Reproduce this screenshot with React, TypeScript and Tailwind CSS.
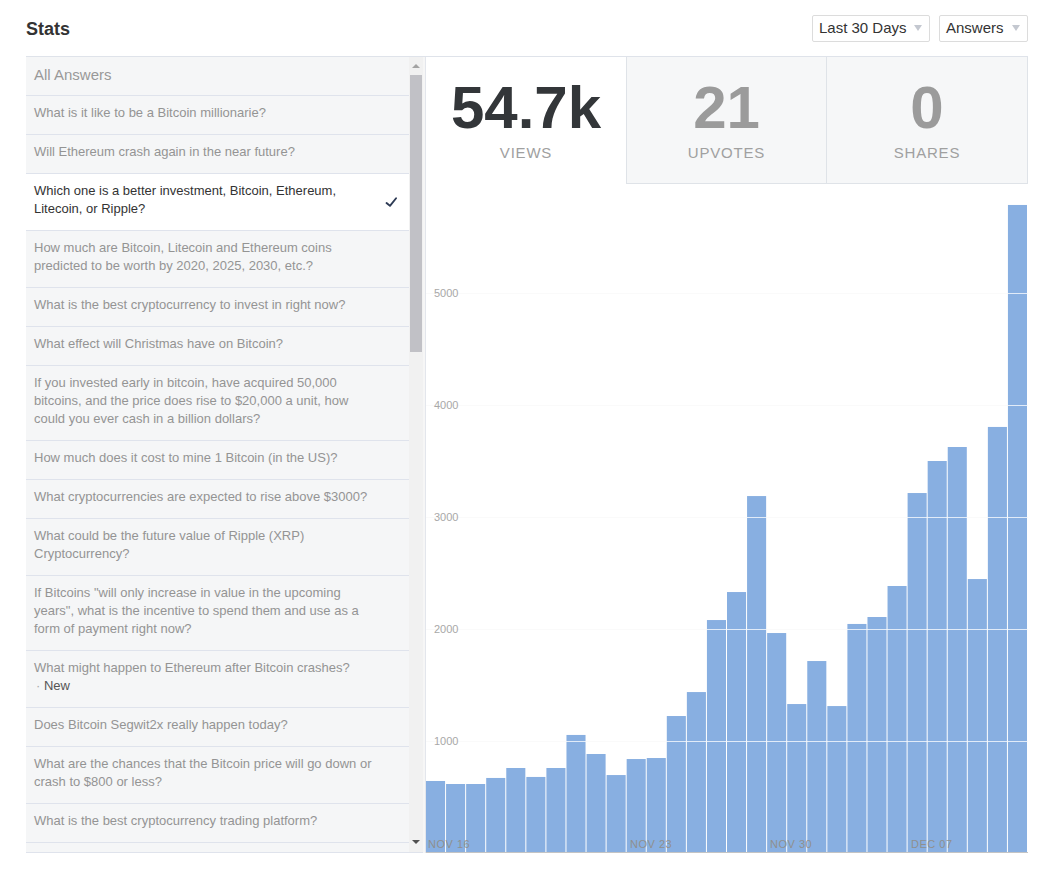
import React from 'react';
import { Check } from 'lucide-react';

const answers: { q: string; selected?: boolean; isNew?: boolean }[] = [
  { q: 'What is it like to be a Bitcoin millionarie?' },
  { q: 'Will Ethereum crash again in the near future?' },
  { q: 'Which one is a better investment, Bitcoin, Ethereum, Litecoin, or Ripple?', selected: true },
  { q: 'How much are Bitcoin, Litecoin and Ethereum coins predicted to be worth by 2020, 2025, 2030, etc.?' },
  { q: 'What is the best cryptocurrency to invest in right now?' },
  { q: 'What effect will Christmas have on Bitcoin?' },
  { q: 'If you invested early in bitcoin, have acquired 50,000 bitcoins, and the price does rise to $20,000 a unit, how could you ever cash in a billion dollars?' },
  { q: 'How much does it cost to mine 1 Bitcoin (in the US)?' },
  { q: 'What cryptocurrencies are expected to rise above $3000?' },
  { q: 'What could be the future value of Ripple (XRP) Cryptocurrency?' },
  { q: 'If Bitcoins "will only increase in value in the upcoming years", what is the incentive to spend them and use as a form of payment right now?' },
  { q: 'What might happen to Ethereum after Bitcoin crashes?', isNew: true },
  { q: 'Does Bitcoin Segwit2x really happen today?' },
  { q: 'What are the chances that the Bitcoin price will go down or crash to $800 or less?' },
  { q: 'What is the best cryptocurrency trading platform?' },
];

const views = [643, 616, 616, 670, 759, 679, 759, 1054, 884, 696, 839, 848, 1223, 1437, 2080, 2330, 3187, 1964, 1330, 1714, 1312, 2045, 2107, 2384, 3214, 3500, 3625, 2446, 3804, 5786];

const W = 602;
const H = 669;
const unit = 112 / 1000;

export default function App() {
  return (
    <div className="w-[1049px] h-[869px] bg-white pl-[26px] pr-[21px] pt-[15px] overflow-hidden" style={{ fontFamily: '"Liberation Sans", Arial, sans-serif' }}>
      {/* Header */}
      <header className="flex items-center justify-between h-[26px] mb-[15px]">
        <h1 className="text-[18px] font-bold text-[#333] mt-[3px]">Stats</h1>
        <div className="flex gap-[9px]">
          <Dropdown label="Last 30 Days" width="w-[118px]" />
          <Dropdown label="Answers" width="w-[89px]" />
        </div>
      </header>

      <div className="flex h-[797px] border-t border-[#dfe3ea]">
        {/* Answer list */}
        <div className="w-[383px] shrink-0 bg-[#f5f6f7] overflow-hidden border-b border-[#dfe3ec]">
          <div className="h-[39px] px-[8px] pb-[2px] flex items-center border-b border-[#dfe3ec] text-[15px] text-[#999]">All Answers</div>
          {answers.map((a, i) => (
            <div
              key={i}
              className={`flex items-center gap-2 px-[8px] pt-[8px] pb-[12px] border-b border-[#dfe3ec] text-[13px] leading-[18px] ${a.selected ? 'bg-white text-[#333]' : 'text-[#949494]'}`}
            >
              <div className="flex-1 pr-[20px]">
                {a.q}
                {a.isNew && (
                  <div className="pl-[2px]">
                    <span className="text-[#aaa]">·</span> <span className="text-[#555]">New</span>
                  </div>
                )}
              </div>
              {a.selected && <Check size={15} strokeWidth={3} className="text-[#2e3b55] mr-[2px] mt-[4px] -rotate-6" />}
            </div>
          ))}
        </div>

        {/* Scrollbar */}
        <div className="w-[14px] shrink-0 bg-[#f1f1f1] flex flex-col items-center border-b border-[#dfe3ec]">
          <div className="h-[18px] flex items-center justify-center">
            <div className="w-0 h-0 border-l-[4px] border-r-[4px] border-b-[4px] border-l-transparent border-r-transparent border-b-[#a3a3a3]" />
          </div>
          <div className="w-[12px] h-[277px] bg-[#c1c1c6]" />
          <div className="flex-1" />
          <div className="h-[20px] flex items-center justify-center">
            <div className="w-0 h-0 border-l-[4px] border-r-[4px] border-t-[4px] border-l-transparent border-r-transparent border-t-[#505050]" />
          </div>
        </div>
        <div className="w-[3px] shrink-0 bg-[#f6f6f6] border-r border-[#e3e6ec]" />

        {/* Stats + chart */}
        <div className="w-[602px] shrink-0 flex flex-col">
          <div className="flex h-[127px]">
            <StatBox value="54.7k" label="Views" active />
            <StatBox value="21" label="Upvotes" />
            <StatBox value="0" label="Shares" last />
          </div>
          <div className="flex-1">
            <svg width={W} height={H} className="block">
              {[1000, 2000, 3000, 4000, 5000].map((v) => (
                <line key={v} x1={0} x2={W} y1={H - v * unit + 0.5} y2={H - v * unit + 0.5} stroke="#ebebeb" />
              ))}
              {views.map((v, i) => {
                const h = v * unit;
                return <rect key={i} x={i * (W / 30)} y={H - h} width={W / 30 - 1} height={h} fill="#88afe1" />;
              })}
              {[1000, 2000, 3000, 4000, 5000].map((v) => (
                <g key={v}>
                  <line x1={0} x2={W} y1={H - v * unit + 0.5} y2={H - v * unit + 0.5} stroke="#ffffff" strokeOpacity={0.75} />
                  <text x={8} y={H - v * unit + 4} fontSize={11} fill="#a8a8a8" fontFamily="Liberation Sans, Arial, sans-serif">{v}</text>
                </g>
              ))}
              <line x1={0} x2={W} y1={H - 0.5} y2={H - 0.5} stroke="#c4c4c4" />
              {[
                ['NOV 16', 2],
                ['NOV 23', 204],
                ['NOV 30', 344],
                ['DEC 07', 485],
              ].map(([t, x]) => (
                <text key={t as string} x={x as number} y={H - 5} fontSize={11} fill="#8f8f8f" letterSpacing={0.5} fontFamily="Liberation Sans, Arial, sans-serif">{t}</text>
              ))}
            </svg>
          </div>
        </div>
      </div>
    </div>
  );
}

function Dropdown({ label, width }: any) {
  return (
    <div className={`${width} h-[27px] border border-[#dcdcdc] rounded-[2px] flex items-center justify-between pl-[6px] pr-[7px] text-[15px] text-[#333]`}>
      <span>{label}</span>
      <span className="w-0 h-0 border-l-[4px] border-r-[4px] border-t-[6px] border-l-transparent border-r-transparent border-t-[#c4c8d0]" />
    </div>
  );
}

function StatBox({ value, label, active, last }: any) {
  return (
    <div
      className={`w-[200px] flex flex-col items-center pt-[21px] ${active ? 'bg-white' : 'bg-[#f6f7f8] border-l border-b border-[#dfe3e8]'} ${last ? 'w-[202px] border-r' : ''}`}
    >
      <div className={`text-[60px] leading-[60px] font-bold ${active ? 'text-[#333639]' : 'text-[#9b9b9b]'}`}>{value}</div>
      <div className="mt-[6px] text-[15px] leading-[18px] uppercase tracking-[0.8px] text-[#a0a0a0]">{label}</div>
    </div>
  );
}
